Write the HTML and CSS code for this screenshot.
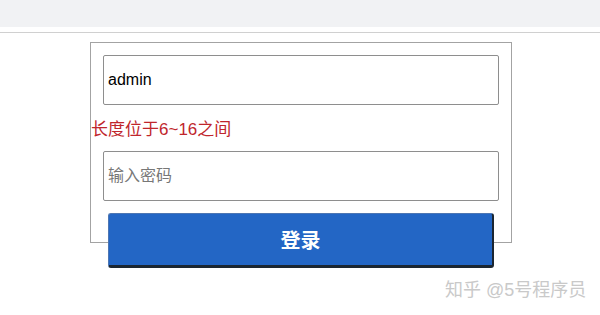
FILE: index.html
```html
<!DOCTYPE html>
<html lang="zh">
<head>
    <meta charset="UTF-8">
    <meta name="viewport" content="width=device-width, initial-scale=1.0">
    <title>登录</title>
    <link rel="stylesheet" href="styles.css">
</head>
<body>
    <div class="topbar"></div>
    <div class="divider"></div>
    <div class="login-box">
        <input type="text" class="field" value="admin">
        <p class="error">长度位于6~16之间</p>
        <input type="password" class="field" placeholder="输入密码">
        <button class="login-btn">登录</button>
    </div>
    <div class="watermark">知乎 @5号程序员</div>
</body>
</html>
```
FILE: styles.css
```css
body {
    margin: 0;
    font-family: "Liberation Sans", "Noto Sans CJK SC", sans-serif;
    background-color: #fff;
    position: relative;
    height: 315px;
    overflow: hidden;
}
.topbar {
    height: 27px;
    background-color: #f1f2f4;
}
.divider {
    margin-top: 5px;
    height: 1px;
    background-color: #d0d0d0;
}
.login-box {
    margin: 9px 0 0 90px;
    width: 420px;
    height: 199px;
    border: 1px solid #a3a3a3;
}
.field {
    display: block;
    box-sizing: border-box;
    width: 396px;
    height: 50px;
    margin: 12px 0 0 12px;
    padding: 0 4px;
    border: 1px solid #8e8e8e;
    border-radius: 2px;
    font-family: "Liberation Sans", "Noto Sans CJK SC", sans-serif;
    font-size: 16px;
    color: #000;
    outline: none;
}
.field::placeholder {
    color: #777;
}
.error {
    margin: 0;
    padding: 14px 0 0 0;
    height: 32px;
    line-height: 22px;
    font-size: 17px;
    color: #c0262c;
}
.error + .field {
    margin-top: 0;
}
.login-btn {
    display: block;
    box-sizing: border-box;
    width: 386px;
    height: 55px;
    margin: 12px 0 0 17px;
    border: 1px solid #4d76b3;
    border-right: 2px solid #1b2631;
    border-bottom: 3px solid #1b2631;
    border-radius: 3px;
    background-color: #2366c5;
    color: #fff;
    font-family: "Liberation Sans", "Noto Sans CJK SC", sans-serif;
    font-size: 20px;
    font-weight: bold;
    cursor: pointer;
}
.watermark {
    position: absolute;
    left: 445px;
    top: 275px;
    font-size: 18px;
    color: #c9c9c9;
    white-space: nowrap;
}
```
